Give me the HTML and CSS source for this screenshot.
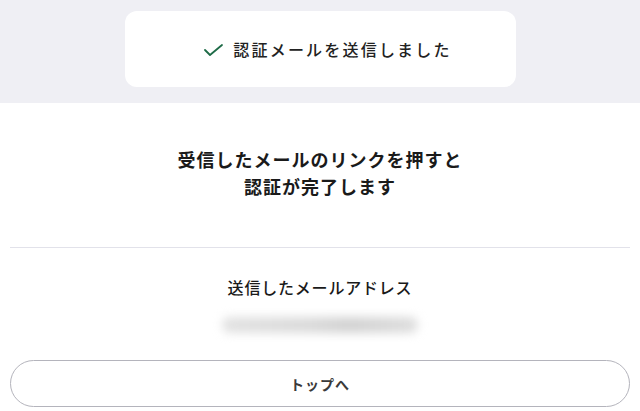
FILE: index.html
```html
<!DOCTYPE html>
<html lang="ja">
<head>
<meta charset="utf-8">
<link rel="stylesheet" href="styles.css">
</head>
<body>
<div class="band">
  <div class="toast">
    <svg class="check" width="19" height="12" viewBox="0 0 19 12"><polyline points="1,6 6,11 18,1" fill="none" stroke="#1e6b47" stroke-width="1.8" stroke-linecap="round" stroke-linejoin="round"/></svg>
    <span class="toast-text">認証メールを送信しました</span>
  </div>
</div>
<main class="content">
  <p class="lead">受信したメールのリンクを押すと<br>認証が完了します</p>
  <hr class="divider">
  <p class="label">送信したメールアドレス</p>
  <div class="email"><div class="blur"></div></div>
  <button class="btn">トップへ</button>
</main>
</body>
</html>
```
FILE: styles.css
```css
* { box-sizing: border-box; }
html, body { margin: 0; padding: 0; }
body {
  width: 640px;
  height: 411px;
  overflow: hidden;
  background: #fff;
  font-family: "Noto Sans CJK JP", "Noto Sans", sans-serif;
  color: #1a1a1a;
}
.band {
  background: #efeff4;
  height: 103px;
  padding-top: 11px;
  display: flex;
  justify-content: center;
}
.toast {
  width: 391px;
  height: 76px;
  background: #fff;
  border-radius: 12px;
  display: flex;
  align-items: center;
  justify-content: center;
  gap: 10px;
  padding-left: 16px;
}
.check { display: block; margin-top: 1px; }
.toast-text {
  font-size: 16px;
  font-weight: 500;
  letter-spacing: 2.2px;
  color: #222;
}
.content {
  display: flex;
  flex-direction: column;
  align-items: center;
  padding: 43px 10px 0;
}
.lead {
  margin: 0;
  font-size: 18px;
  line-height: 27px;
  font-weight: 700;
  letter-spacing: 1px;
  text-align: center;
  color: #1a1a1a;
}
.divider {
  align-self: stretch;
  margin: 47px 0 0;
  border: 0;
  height: 1px;
  background: #e2e2ea;
}
.label {
  margin: 27px 0 0;
  font-size: 16px;
  line-height: 24px;
  font-weight: 500;
  letter-spacing: 0.8px;
  color: #1a1a1a;
}
.email {
  margin-top: 14px;
  width: 220px;
  height: 24px;
  display: flex;
  align-items: center;
  justify-content: center;
}
.blur {
  width: 196px;
  height: 16px;
  background: linear-gradient(90deg, #e2e2e2 0%, #dadada 45%, #d2d2d2 65%, #dedede 100%);
  border-radius: 8px;
  filter: blur(5px);
}
.btn {
  margin-top: 23px;
  align-self: stretch;
  height: 47px;
  border: 1.5px solid #b4b4bc;
  border-radius: 24px;
  background: #fff;
  font-family: inherit;
  font-size: 14px;
  font-weight: 600;
  letter-spacing: 1px;
  color: #3a3a3a;
}
```
